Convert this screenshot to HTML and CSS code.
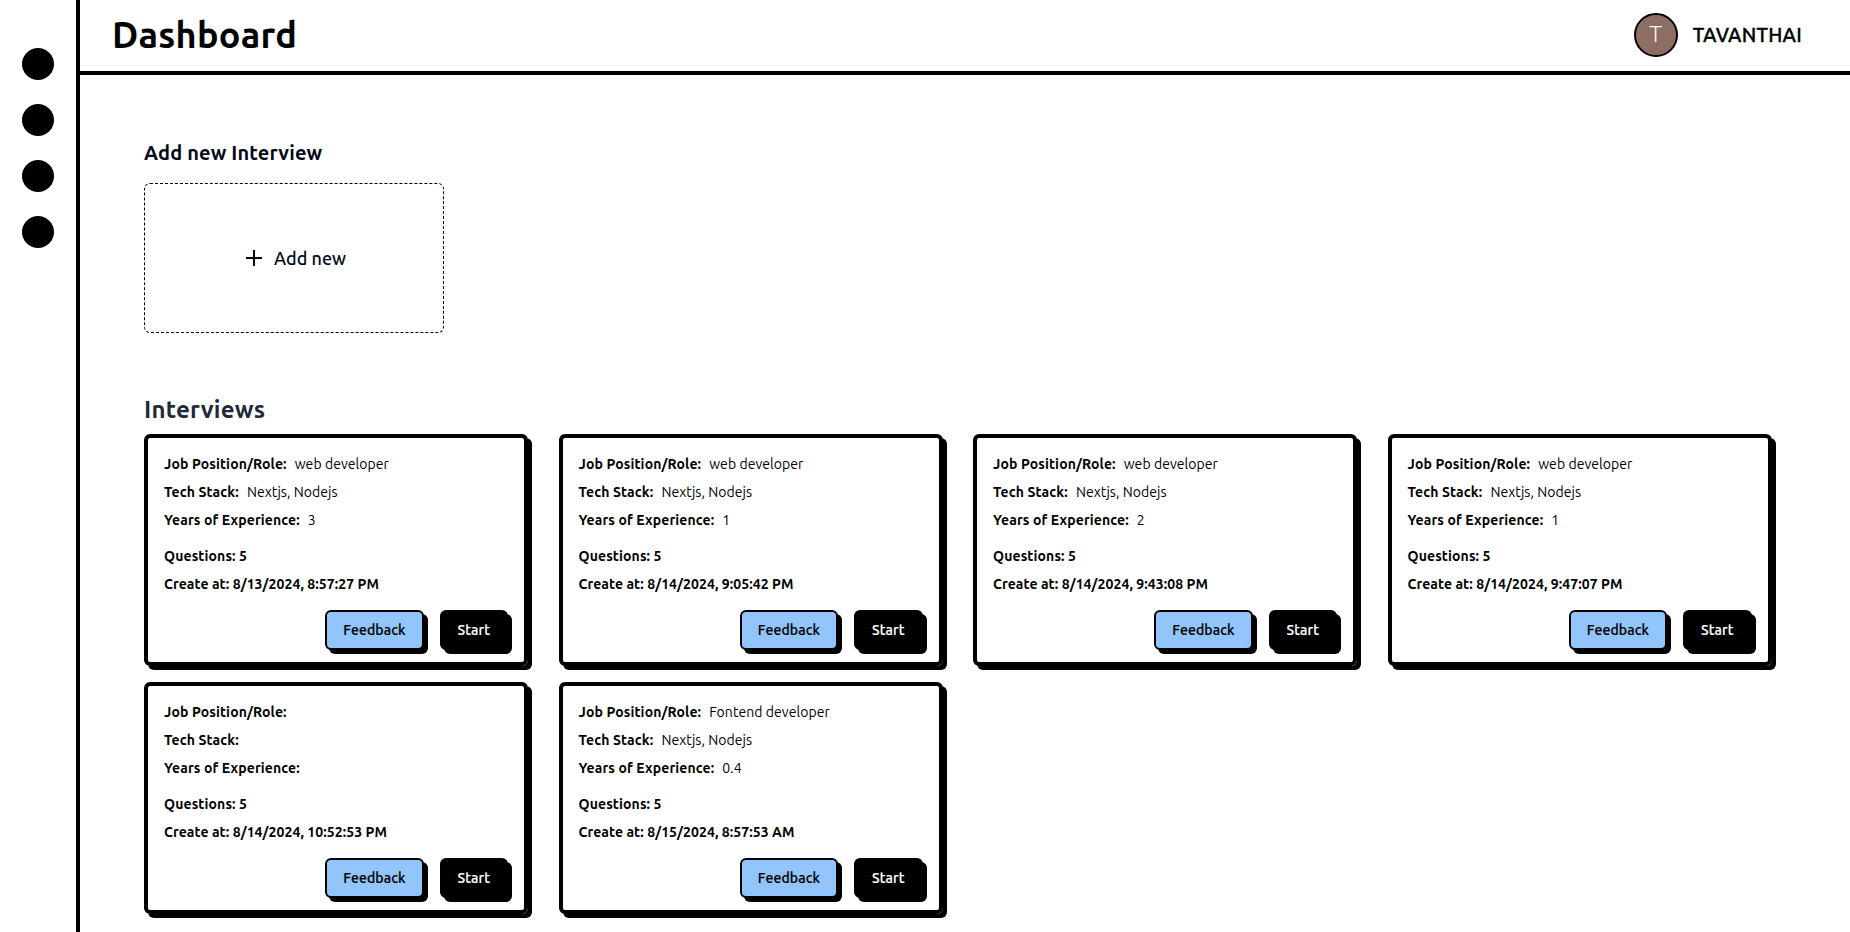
FILE: index.html
```
<!DOCTYPE html>
<html lang="en">
<head>
<meta charset="utf-8">
<title>Dashboard</title>
<link rel="stylesheet" href="styles.css">
</head>
<body>
<div class="app">
  <aside class="sidebar">
    <span class="dot"></span>
    <span class="dot"></span>
    <span class="dot"></span>
    <span class="dot"></span>
  </aside>
  <div class="page">
    <header class="header">
      <h1 class="title">Dashboard</h1>
      <div class="user">
        <span class="avatar">T</span>
        <span class="user-name">TAVANTHAI</span>
      </div>
    </header>
    <main class="main">
      <h2 class="add-title">Add new Interview</h2>
      <button class="add-box">
        <svg class="plus" width="24" height="24" viewBox="0 0 24 24" fill="none" stroke="currentColor" stroke-width="2" stroke-linecap="square"><path d="M5 12h14M12 5v14"/></svg>
        <span>Add new</span>
      </button>
      <h2 class="list-title">Interviews</h2>
      <section class="grid">
        <article class="card">
          <p class="line"><b>Job Position/Role:</b><span>web developer</span></p>
          <p class="line"><b>Tech Stack:</b><span>Nextjs, Nodejs</span></p>
          <p class="line"><b>Years of Experience:</b><span>3</span></p>
          <p class="line meta"><b>Questions: 5</b></p>
          <p class="line"><b class="date">Create at: 8/13/2024, 8:57:27 PM</b></p>
          <div class="actions"><button class="btn feedback">Feedback</button><button class="btn start">Start</button></div>
        </article>
        <article class="card">
          <p class="line"><b>Job Position/Role:</b><span>web developer</span></p>
          <p class="line"><b>Tech Stack:</b><span>Nextjs, Nodejs</span></p>
          <p class="line"><b>Years of Experience:</b><span>1</span></p>
          <p class="line meta"><b>Questions: 5</b></p>
          <p class="line"><b class="date">Create at: 8/14/2024, 9:05:42 PM</b></p>
          <div class="actions"><button class="btn feedback">Feedback</button><button class="btn start">Start</button></div>
        </article>
        <article class="card">
          <p class="line"><b>Job Position/Role:</b><span>web developer</span></p>
          <p class="line"><b>Tech Stack:</b><span>Nextjs, Nodejs</span></p>
          <p class="line"><b>Years of Experience:</b><span>2</span></p>
          <p class="line meta"><b>Questions: 5</b></p>
          <p class="line"><b class="date">Create at: 8/14/2024, 9:43:08 PM</b></p>
          <div class="actions"><button class="btn feedback">Feedback</button><button class="btn start">Start</button></div>
        </article>
        <article class="card">
          <p class="line"><b>Job Position/Role:</b><span>web developer</span></p>
          <p class="line"><b>Tech Stack:</b><span>Nextjs, Nodejs</span></p>
          <p class="line"><b>Years of Experience:</b><span>1</span></p>
          <p class="line meta"><b>Questions: 5</b></p>
          <p class="line"><b class="date">Create at: 8/14/2024, 9:47:07 PM</b></p>
          <div class="actions"><button class="btn feedback">Feedback</button><button class="btn start">Start</button></div>
        </article>
        <article class="card">
          <p class="line"><b>Job Position/Role:</b></p>
          <p class="line"><b>Tech Stack:</b></p>
          <p class="line"><b>Years of Experience:</b></p>
          <p class="line meta"><b>Questions: 5</b></p>
          <p class="line"><b class="date">Create at: 8/14/2024, 10:52:53 PM</b></p>
          <div class="actions"><button class="btn feedback">Feedback</button><button class="btn start">Start</button></div>
        </article>
        <article class="card">
          <p class="line"><b>Job Position/Role:</b><span>Fontend developer</span></p>
          <p class="line"><b>Tech Stack:</b><span>Nextjs, Nodejs</span></p>
          <p class="line"><b>Years of Experience:</b><span>0.4</span></p>
          <p class="line meta"><b>Questions: 5</b></p>
          <p class="line"><b class="date">Create at: 8/15/2024, 8:57:53 AM</b></p>
          <div class="actions"><button class="btn feedback">Feedback</button><button class="btn start">Start</button></div>
        </article>
      </section>
    </main>
  </div>
</div>
</body>
</html>
```
FILE: styles.css
```
* { box-sizing: border-box; margin: 0; padding: 0; }
body { background: #fff; color: #000; font-family: Ubuntu, "Noto Sans", sans-serif; overflow: hidden; }
button { font-family: inherit; color: inherit; background: none; }
.app { display: flex; height: 932px; }
.sidebar { width: 80px; flex: none; border-right: 4px solid #000; padding-top: 48px; display: flex; flex-direction: column; align-items: center; gap: 24px; }
.dot { width: 32px; height: 32px; border-radius: 50%; background: #000; }
.page { flex: 1; min-width: 0; }
.header { height: 75px; border-bottom: 4px solid #000; display: flex; align-items: center; justify-content: space-between; padding: 0 48px 1px 32px; }
.title { font-size: 36px; line-height: 40px; font-weight: 700; letter-spacing: 0.27px; }
.user { display: flex; align-items: center; gap: 15px; }
.avatar { width: 44px; height: 44px; border: 2px solid #000; border-radius: 50%; background: #8d6e63; color: #fff; font: 300 22px/40px Roboto, sans-serif; text-align: center; }
.user-name { font-size: 20px; line-height: 28px; font-weight: 500; letter-spacing: 0.22px; -webkit-text-stroke: 0.3px currentColor; }
.main { padding: 64px 0 0 64px; }
.add-title { font-size: 20px; line-height: 28px; font-weight: 700; letter-spacing: 0.14px; color: #020817; margin-bottom: 16px; }
.add-box { width: 300px; height: 150px; border: 1px dashed #000; border-radius: 6px; color: #020817; display: flex; align-items: center; justify-content: center; gap: 8px; font-size: 18px; line-height: 28px; font-weight: 500; }
.list-title { font-size: 24px; line-height: 32px; font-weight: 700; letter-spacing: 0.22px; color: #1f2937; margin: 61px 0 8px; }
.grid { display: grid; grid-template-columns: repeat(4, 384px); gap: 16px 30.5px; }
.card { height: 232px; border: 4px solid #000; border-radius: 6px; box-shadow: 4px 4px 0 #000; padding: 16px 16px 0; }
.line { display: flex; gap: 8px; font-size: 14px; line-height: 20px; height: 20px; margin-bottom: 8px; white-space: nowrap; letter-spacing: 0.06px; }
.line b { font-weight: 700; letter-spacing: 0.12px; }
.line .date { letter-spacing: 0.07px; }
.meta { margin-top: 16px; }
.actions { display: flex; justify-content: flex-end; gap: 16px; margin-top: 16px; }
.btn { height: 40px; border: 2px solid #000; border-radius: 6px; box-shadow: 4px 4px 0 #000; padding: 0 16px; font-size: 14px; font-weight: 500; line-height: 20px; letter-spacing: 0.12px; -webkit-text-stroke: 0.2px currentColor; }
.feedback { background: #93c5fd; }
.start { background: #000; color: #fff; }
```
